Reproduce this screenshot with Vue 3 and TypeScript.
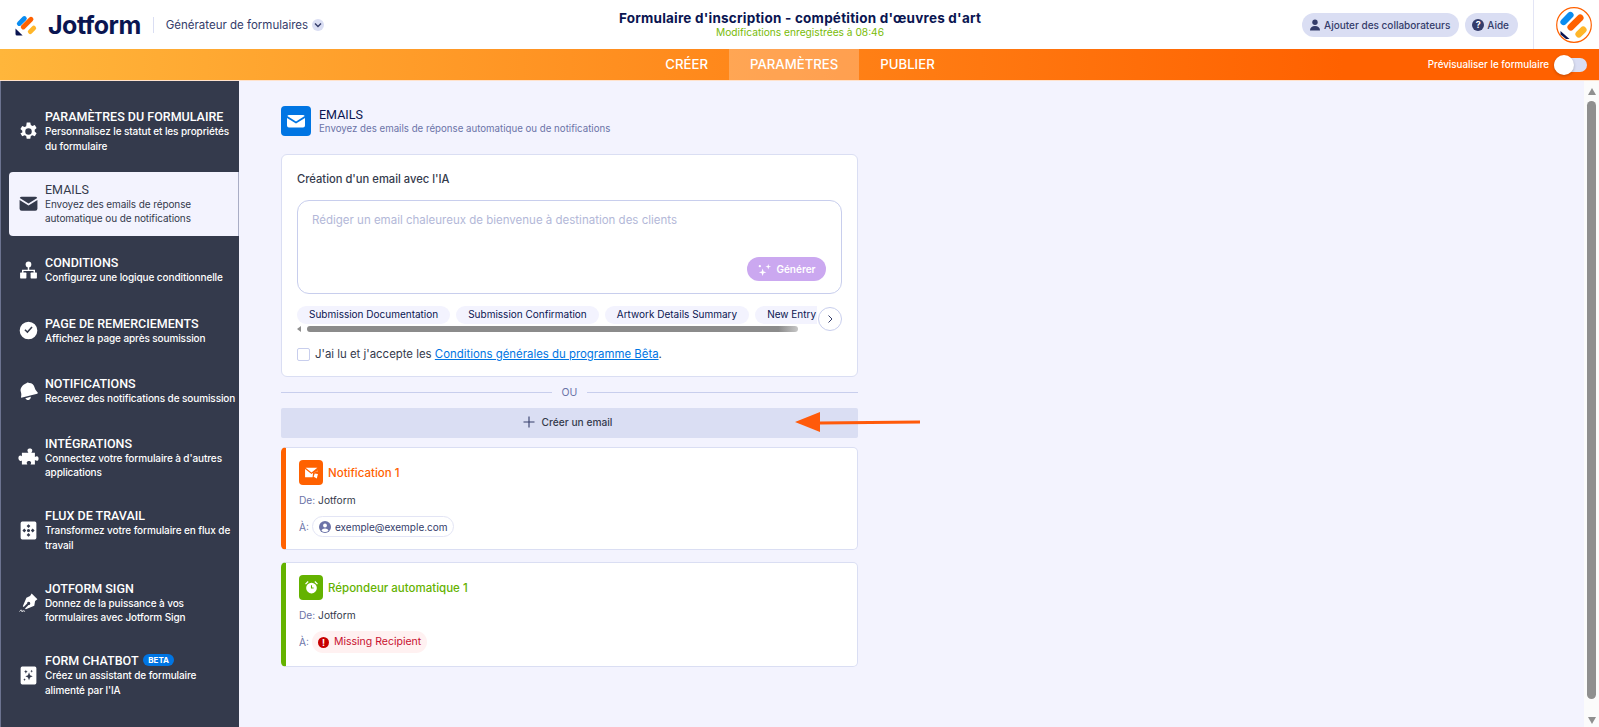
<script setup lang="ts">
interface NavItem {
  title: string
  desc: string
  icon: string
  active?: boolean
  beta?: boolean
}

const navItems: NavItem[] = [
  { title: "PARAMÈTRES DU FORMULAIRE", desc: "Personnalisez le statut et les propriétés du formulaire", icon: "gear" },
  { title: "EMAILS", desc: "Envoyez des emails de réponse automatique ou de notifications", icon: "mail", active: true },
  { title: "CONDITIONS", desc: "Configurez une logique conditionnelle", icon: "tree" },
  { title: "PAGE DE REMERCIEMENTS", desc: "Affichez la page après soumission", icon: "check" },
  { title: "NOTIFICATIONS", desc: "Recevez des notifications de soumission", icon: "bell" },
  { title: "INTÉGRATIONS", desc: "Connectez votre formulaire à d'autres applications", icon: "puzzle" },
  { title: "FLUX DE TRAVAIL", desc: "Transformez votre formulaire en flux de travail", icon: "flow" },
  { title: "JOTFORM SIGN", desc: "Donnez de la puissance à vos formulaires avec Jotform Sign", icon: "pen" },
  { title: "FORM CHATBOT", desc: "Créez un assistant de formulaire alimenté par l'IA", icon: "spark", beta: true },
]

const chips = ["Submission Documentation", "Submission Confirmation", "Artwork Details Summary", "New Entry Alert"]
</script>

<template>
  <div class="page">
    <header class="topbar">
      <div class="brand">
        <svg class="logo" viewBox="0 0 32 32" width="32" height="32">
          <rect x="-1.5" y="-8" width="6.4" height="16" rx="3.2" fill="#0a8cf0" transform="translate(9.2 9.5) rotate(45)" />
          <rect x="-3.2" y="-10.5" width="6.4" height="21" rx="3.2" fill="#ff6100" transform="translate(17.5 13.5) rotate(45)" />
          <rect x="-3.2" y="-6.5" width="6.4" height="13" rx="3.2" fill="#ffb629" transform="translate(24 22.5) rotate(45)" />
          <path d="M2 20.5v7.5a2 2 0 0 0 2 2h7.5z" fill="#0a1551" />
        </svg>
        <span class="wordmark">Jotform</span>
        <span class="brand-sep"></span>
        <span class="builder">Générateur de formulaires</span>
        <span class="caret">
          <svg viewBox="0 0 12 12" width="12" height="12"><path d="M3 4.500 6 7.500 9 4.500" fill="none" stroke="#343c6a" stroke-width="1.400" /></svg>
        </span>
      </div>
      <div class="form-title">
        <div class="form-name">Formulaire d'inscription - compétition d'œuvres d'art</div>
        <div class="saved">Modifications enregistrées à 08:46</div>
      </div>
      <div class="top-actions">
        <button class="pill">
          <svg viewBox="0 0 12 12" width="12" height="12"><circle cx="6" cy="3.200" r="2.700" fill="#343c6a" /><path d="M1 11.500c0-3 2-4.600 5-4.600s5 1.600 5 4.600z" fill="#343c6a" /></svg>
          Ajouter des collaborateurs
        </button>
        <button class="pill">
          <span class="help">?</span>
          Aide
        </button>
        <span class="top-sep"></span>
        <span class="avatar">
          <svg viewBox="0 0 36 36" width="36" height="36">
            <circle cx="18" cy="18" r="17.300" fill="#fff" stroke="#ff6100" stroke-width="1.200" />
            <rect x="-3.200" y="-8" width="6.400" height="16" rx="3.200" fill="#0a8cf0" transform="translate(11 11.500) rotate(45)" />
            <rect x="-3.400" y="-10" width="6.800" height="20" rx="3.400" fill="#ff6100" transform="translate(19.500 15.500) rotate(45)" />
            <rect x="-3.400" y="-6.500" width="6.800" height="13" rx="3.400" fill="#ffb629" transform="translate(25 25) rotate(45)" />
            <path d="M4.500 24v3.500l5.500 4.500h3.500z" fill="#0a1551" />
          </svg>
        </span>
      </div>
    </header>

    <nav class="tabs">
      <div class="tab-list">
        <a class="tab">CRÉER</a>
        <a class="tab tab-active">PARAMÈTRES</a>
        <a class="tab">PUBLIER</a>
      </div>
      <div class="preview">
        <span>Prévisualiser le formulaire</span>
        <span class="toggle"><span class="knob"></span></span>
      </div>
    </nav>

    <div class="body">
      <aside class="sidebar">
        <div v-for="item in navItems" :key="item.title" class="nav-item" :class="{ active: item.active }">
          <span class="nav-icon">
            <svg viewBox="0 0 20 20" width="21" height="21" fill="currentColor">
              <template v-if="item.icon === 'gear'">
                <path fill-rule="evenodd" d="M8.300 1.500h3.400l.5 2.400 1.500.8 2.300-.9 1.700 2.900-1.800 1.600v1.700l1.800 1.600-1.700 2.900-2.300-.9-1.500.8-.5 2.400H8.300l-.5-2.400-1.500-.8-2.300.9-1.700-2.900L4.100 11V9.300L2.300 7.700 4 4.800l2.300.9 1.500-.8zM10 7a3.100 3.100 0 1 0 0 6.200A3.100 3.100 0 0 0 10 7z" />
              </template>
              <template v-else-if="item.icon === 'mail'">
                <path d="M3.500 3.500h13a2 2 0 0 1 1.800 1.200L10 10 1.700 4.700a2 2 0 0 1 1.800-1.200z" />
                <path d="M1.500 6.700 10 12l8.500-5.300V15a2 2 0 0 1-2 2h-13a2 2 0 0 1-2-2z" />
              </template>
              <template v-else-if="item.icon === 'tree'">
                <circle cx="10" cy="4.200" r="2.700" />
                <path d="M9.300 6h1.400v3.200h5.500v3h-1.400v-1.700H5.200v1.700H3.800v-3h5.500z" />
                <rect x="2" y="12" width="6" height="5.500" rx=".6" />
                <rect x="12" y="12" width="6" height="5.500" rx=".6" />
              </template>
              <template v-else-if="item.icon === 'check'">
                <path fill-rule="evenodd" d="M10 1.600a8.400 8.400 0 1 1 0 16.800 8.400 8.400 0 0 1 0-16.800zm3.900 5.500-1.100-1-3.900 4.300-1.800-1.700-1 1.100 2.900 2.800z" />
              </template>
              <template v-else-if="item.icon === 'bell'">
                <path d="M8 2.200c.5-.9 1.600-1 2.300-.3 3-.2 4.800 1.800 5.600 4.500.6 2 1.500 3.200 2.700 4.300.5.500.3 1.200-.3 1.400L4 15.800c-.7.200-1.200-.3-1.100-.9.400-1.600.4-3.100-.3-5C1.800 7.200 3.900 3.900 8 2.200z" />
                <path d="M7 16.500l5.200-1.400c.1 1.500-.7 2.700-2 3-1.300.3-2.500-.4-3.200-1.600z" />
              </template>
              <template v-else-if="item.icon === 'puzzle'">
                <path d="M7.600 5.500h2.300c-.6-.8-.9-1.500-.9-2.200C9 2 10.100 1.400 11.300 1.400s2.300.6 2.300 1.900c0 .7-.3 1.400-.9 2.200h3.400v4c.7-.5 1.300-.8 1.900-.8 1.100 0 1.600 1 1.600 2.200s-.5 2.300-1.600 2.300c-.6 0-1.200-.3-1.900-.8v4.200h-4.200c.4-.7.600-1.200.6-1.700 0-1-1-1.600-2.100-1.600s-2.100.6-2.100 1.600c0 .5.200 1 .6 1.700H3.700v-3.700c-.5.300-1 .5-1.500.5C1 12.800.4 11.700.4 10.500s.6-2.300 1.800-2.300c.5 0 1 .2 1.500.5V5.500z" />
              </template>
              <template v-else-if="item.icon === 'flow'">
                <path fill-rule="evenodd" d="M4 1.500h12A1.500 1.500 0 0 1 17.500 3v14a1.500 1.500 0 0 1-1.500 1.500H4A1.500 1.500 0 0 1 2.500 17V3A1.500 1.500 0 0 1 4 1.500zM10 4 8.200 5.800 10 7.600l1.800-1.800zM6 8.200 4.200 10 6 11.800 7.800 10zm8 0L12.200 10l1.800 1.800 1.800-1.800zm-4 4.200-1.800 1.800L10 16l1.800-1.800zM10 8.500a1.500 1.500 0 1 0 0 3 1.500 1.500 0 0 0 0-3z" />
              </template>
              <template v-else-if="item.icon === 'pen'">
                <path fill-rule="evenodd" d="M13 1.500l5.500 5.500-2.200 1.500-.8 4.500-8 3.400-.8-.8 3.300-3.300a1.500 1.500 0 1 0-1.300-1.300L5.400 14.300l-.8-.8L8 5.500l3.500-1.600z" />
                <path d="M1.500 18.500c.8-1.200 1.700-1.600 2-1s-.3 1.200.4 1.100 1-.9 1.600-.7.500.6 1.200.5" fill="none" stroke="currentColor" stroke-width=".900" />
              </template>
              <template v-else>
                <path fill-rule="evenodd" d="M4 1.500h12A1.500 1.500 0 0 1 17.500 3v14a1.500 1.500 0 0 1-1.500 1.500H4A1.500 1.500 0 0 1 2.500 17V3A1.500 1.500 0 0 1 4 1.500zM10.500 7l-1 2.800-2.500 1 2.500 1 1 2.700 1-2.700 2.500-1-2.500-1zM7.500 4.500 7 5.800l-1.200.7 1.200.5.500 1.300.5-1.300 1.200-.5L8 5.800zm5.500 0-.4 1-.9.400.9.400.4 1 .4-1 .9-.4-.9-.4zm-6.800 8-.4 1-.9.400.9.400.4 1 .4-1 .9-.4-.9-.4z" />
              </template>
            </svg>
          </span>
          <div class="nav-text">
            <div class="nav-title">
              {{ item.title }}
              <span v-if="item.beta" class="beta">BETA</span>
            </div>
            <div class="nav-desc">{{ item.desc }}</div>
          </div>
        </div>
      </aside>

      <main class="main">
        <div class="section-head">
          <span class="section-icon">
            <svg viewBox="0 0 20 20" width="20" height="20" fill="#fff">
              <path d="M3 4h14a2 2 0 0 1 1.700 1L10 10.400 1.300 5A2 2 0 0 1 3 4z" />
              <path d="M1 7l9 5.500L19 7v7.500a2 2 0 0 1-2 2H3a2 2 0 0 1-2-2z" />
            </svg>
          </span>
          <div>
            <div class="section-title">EMAILS</div>
            <div class="section-sub">Envoyez des emails de réponse automatique ou de notifications</div>
          </div>
        </div>

        <div class="column">
          <section class="ai-card">
            <h3 class="ai-title">Création d'un email avec l'IA</h3>
            <div class="prompt">
              <div class="placeholder">Rédiger un email chaleureux de bienvenue à destination des clients</div>
              <button class="generate">
                <svg viewBox="0 0 16 16" width="15" height="15" fill="#fff">
                  <path d="M6 7l1 3 3 1-3 1-1 3-1-3-3-1 3-1z" />
                  <path d="M12 2l.7 2.300L15 5l-2.300.7L12 8l-.7-2.300L9 5l2.300-.7z" />
                  <circle cx="3" cy="4.500" r="1.200" />
                </svg>
                Générer
              </button>
            </div>
            <div class="chips-wrap">
              <div class="chips">
                <span v-for="chip in chips" :key="chip" class="chip">{{ chip }}</span>
              </div>
              <div class="chips-track">
                <span class="chips-arrow"></span>
                <span class="chips-thumb"></span>
              </div>
              <button class="chips-next">
                <svg viewBox="0 0 12 12" width="12" height="12"><path d="M4.500 2.500 8 6 4.500 9.500" fill="none" stroke="#343c6a" stroke-width="1" /></svg>
              </button>
            </div>
            <label class="terms">
              <span class="checkbox"></span>
              <span>J'ai lu et j'accepte les <a class="link">Conditions générales du programme Bêta</a>.</span>
            </label>
          </section>

          <div class="or"><span>OU</span></div>

          <button class="create">
            <svg viewBox="0 0 12 12" width="12" height="12"><path d="M6 .5v11M.5 6h11" stroke="#343c6a" stroke-width="1.100" fill="none" /></svg>
            Créer un email
          </button>

          <article class="mail-card orange">
            <div class="mail-head">
              <span class="mail-icon">
                <svg viewBox="0 0 14 14" width="15" height="15" fill="#fff">
                  <path d="M1.500 2.500h11L7 7z" />
                  <path d="M1 3.800 7 8.500l2-1.500 3.800-1.500L13 3.800v2l-4.500 1.500L8 11.500H1z" />
                  <path d="M10 8l3 .5-1 4-3-1.500z" />
                </svg>
              </span>
              <span class="mail-name">Notification 1</span>
            </div>
            <div class="mail-line"><span class="mail-key">De:</span> Jotform</div>
            <div class="mail-line to">
              <span class="mail-key">À:</span>
              <span class="recipient">
                <svg viewBox="0 0 12 12" width="12" height="12">
                  <circle cx="6" cy="6" r="6" fill="#6c73a8" />
                  <circle cx="6" cy="4.500" r="1.900" fill="#fff" />
                  <path d="M2.500 9.800c.5-1.700 1.800-2.400 3.500-2.400s3 .7 3.500 2.400A5 5 0 0 1 6 11a5 5 0 0 1-3.500-1.200z" fill="#fff" />
                </svg>
                exemple@exemple.com
              </span>
            </div>
          </article>

          <article class="mail-card green">
            <div class="mail-head">
              <span class="mail-icon">
                <svg viewBox="0 0 14 14" width="15" height="15" fill="#fff">
                  <path fill-rule="evenodd" d="M7 2.500a5 5 0 1 1 0 10 5 5 0 0 1 0-10zM6.500 5v3h2.500V7H7.500V5z" />
                  <path d="M1 3.500 3.500 1l.8.8-2.500 2.500zM13 3.500 10.500 1l-.8.8 2.500 2.500z" />
                </svg>
              </span>
              <span class="mail-name">Répondeur automatique 1</span>
            </div>
            <div class="mail-line"><span class="mail-key">De:</span> Jotform</div>
            <div class="mail-line to">
              <span class="mail-key">À:</span>
              <span class="missing">
                <span class="bang">!</span>
                Missing Recipient
              </span>
            </div>
          </article>

          <svg class="arrow" viewBox="0 0 128 22" width="128" height="22">
            <path d="M126 9.500 26 10.500V1L1 11l25 10v-7.500l100-1z" fill="#ff5a0a" />
          </svg>
        </div>
      </main>

      <div class="scrollbar">
        <span class="sb-up"></span>
        <span class="sb-thumb"></span>
        <span class="sb-down"></span>
      </div>
    </div>
  </div>
</template>

<style>
html,
body {
  margin: 0;
  padding: 0;
  overflow: hidden;
}
</style>

<style scoped>
.page {
  height: 727px;
  display: flex;
  flex-direction: column;
  overflow: hidden;
  font-family: Inter, "Noto Sans", sans-serif;
  color: #0a1551;
  background: #f3f3fe;
}

button {
  font-family: inherit;
  border: none;
  cursor: pointer;
}

.topbar {
  height: 49px;
  flex: none;
  background: #fff;
  display: grid;
  grid-template-columns: 1fr auto 1fr;
  align-items: center;
}

.brand {
  display: flex;
  align-items: center;
  padding-left: 14px;
}

.logo {
  width: 24px;
  height: 24px;
}

.wordmark {
  margin-left: 10px;
  font-size: 25px;
  font-weight: 700;
  letter-spacing: -0.5px;
  color: #0a1551;
}

.brand-sep {
  width: 1px;
  height: 16px;
  margin: 0 12px;
  background: #dadef3;
}

.builder {
  font-size: 11.5px;
  color: #343c6a;
}

.caret {
  width: 12px;
  height: 12px;
  margin-left: 4px;
  border-radius: 50%;
  background: #dadef3;
  display: flex;
}

.form-title {
  text-align: center;
  margin: -1px 0 0 1px;
}

.form-name {
  font-size: 13.5px;
  font-weight: 700;
  line-height: 16px;
  letter-spacing: 0.22px;
  color: #0a1551;
}

.saved {
  font-size: 10.2px;
  line-height: 12px;
  color: #78bb07;
}

.top-actions {
  display: flex;
  align-items: center;
  justify-content: flex-end;
  gap: 6px;
}

.pill {
  height: 24px;
  padding: 0 9px 0 7px;
  border-radius: 12px;
  background: #dadef3;
  color: #343c6a;
  font-size: 10px;
  font-weight: 500;
  display: flex;
  align-items: center;
  gap: 3px;
}

.help {
  width: 12px;
  height: 12px;
  border-radius: 50%;
  background: #343c6a;
  color: #fff;
  font-size: 9px;
  font-weight: 700;
  line-height: 12px;
  text-align: center;
}

.top-sep {
  width: 1px;
  height: 49px;
  margin: 0 16px 0 9px;
  background: #e3e5f5;
}

.avatar {
  display: flex;
  margin-right: 7px;
}

.tabs {
  height: 32px;
  flex: none;
  position: relative;
  display: flex;
  justify-content: center;
  background: linear-gradient(90deg, #ffb63b 0%, #ff6100 84%);
  border-bottom: 1px solid #ffe2cc;
  box-sizing: border-box;
}

.tab-list {
  display: flex;
  margin-left: 1px;
}

.tab {
  padding: 0 21px;
  color: #fff;
  font-size: 13.2px;
  font-weight: 500;
  line-height: 31px;
}

.tab-active {
  background: rgba(255, 255, 255, 0.25);
}

.preview {
  position: absolute;
  right: 12px;
  top: 0;
  height: 31px;
  display: flex;
  align-items: center;
  gap: 5px;
  color: #fff;
  font-size: 9.8px;
  font-weight: 500;
}

.toggle {
  width: 33px;
  height: 14px;
  border-radius: 7px;
  background: #dadef3;
  display: flex;
  align-items: center;
}

.knob {
  width: 20px;
  height: 20px;
  border-radius: 50%;
  background: #fff;
  box-shadow: 0 1px 3px rgba(0, 0, 0, 0.25);
}

.body {
  flex: 1;
  display: flex;
  min-height: 0;
}

.sidebar {
  width: 239px;
  flex: none;
  box-sizing: border-box;
  background: #343a4c;
  border-left: 1px solid #6c7390;
  padding: 18px 0 0 8px;
  display: flex;
  flex-direction: column;
  gap: 8.5px;
  color: #fff;
}

.nav-item {
  min-height: 52px;
  box-sizing: border-box;
  padding: 10px 2.5px 10px 10px;
  border-radius: 4px 0 0 4px;
  display: flex;
  align-items: center;
  gap: 8px;
}

.nav-item.active {
  background: #f3f3fe;
  color: #343a4c;
  box-shadow: inset -1px 0 #a9adc5;
}

.nav-icon {
  width: 18px;
  flex: none;
  display: flex;
  justify-content: center;
}

.nav-icon svg {
  flex: none;
}

.nav-text {
  min-width: 0;
}

.nav-title {
  font-family: Roboto, Inter, sans-serif;
  font-size: 12.5px;
  font-weight: 500;
  line-height: 15px;
  white-space: nowrap;
}

.active .nav-title {
  font-weight: 400;
}

.nav-desc {
  font-size: 10px;
  font-weight: 500;
  line-height: 14.5px;
  letter-spacing: -0.1px;
}

.active .nav-desc {
  font-weight: 400;
}

.beta {
  display: inline-block;
  margin-left: 2px;
  padding: 0 5px;
  border-radius: 6px;
  background: #0075e3;
  font-family: Inter, sans-serif;
  font-size: 8px;
  font-weight: 700;
  line-height: 12px;
  vertical-align: 2px;
}

.main {
  flex: 1;
  min-width: 0;
  padding: 25px 0 0 42px;
}

.section-head {
  display: flex;
  align-items: center;
  gap: 8px;
}

.section-icon {
  width: 30px;
  height: 30px;
  border-radius: 4px;
  background: #0075e3;
  display: flex;
  align-items: center;
  justify-content: center;
}

.section-title {
  font-family: Roboto, Inter, sans-serif;
  font-size: 12.5px;
  line-height: 15px;
  color: #0a1551;
}

.section-sub {
  font-size: 9.7px;
  line-height: 13px;
  color: #6c73a8;
}

.column {
  position: relative;
  width: 577px;
  margin-top: 18px;
}

.ai-card {
  height: 223px;
  box-sizing: border-box;
  padding: 17px 15px 0;
  background: #fff;
  border: 1px solid #dadef3;
  border-radius: 6px;
}

.ai-title {
  margin: 0;
  font-size: 11.2px;
  font-weight: 500;
  line-height: 14px;
  color: #343a4c;
}

.prompt {
  position: relative;
  height: 94px;
  margin-top: 14px;
  box-sizing: border-box;
  padding: 11px 14px;
  border: 1px solid #c8ceed;
  border-radius: 12px;
}

.placeholder {
  font-size: 11.5px;
  line-height: 16px;
  color: #b3b8d8;
}

.generate {
  position: absolute;
  right: 15px;
  bottom: 12px;
  width: 79px;
  height: 24px;
  border-radius: 12px;
  background: #cba8f0;
  color: #fff;
  font-size: 10px;
  font-weight: 600;
  display: flex;
  align-items: center;
  justify-content: center;
  gap: 4px;
  padding-right: 6px;
}

.chips-wrap {
  position: relative;
  margin-top: 12px;
  overflow: hidden;
  width: 545px;
}

.chips {
  display: flex;
  gap: 6px;
  width: 520px;
  overflow: hidden;
}

.chip {
  flex: none;
  height: 18px;
  padding: 0 12px;
  border-radius: 9px;
  background: #f3f3fe;
  color: #0a1551;
  font-size: 10px;
  line-height: 17px;
  white-space: nowrap;
}

.chips-track {
  height: 6px;
  margin-top: 2px;
  display: flex;
  align-items: center;
}

.chips-arrow {
  width: 0;
  height: 0;
  margin-right: 6px;
  border-top: 3px solid transparent;
  border-bottom: 3px solid transparent;
  border-right: 4px solid #8f8f8f;
}

.chips-thumb {
  width: 491px;
  height: 6px;
  border-radius: 3px;
  background: linear-gradient(90deg, #8b8b8b 96%, #c6c6c6);
}

.chips-next {
  position: absolute;
  right: 0;
  top: 1px;
  width: 24px;
  height: 24px;
  padding: 0;
  border: 1px solid #c8ceed;
  border-radius: 50%;
  background: #fff;
  display: flex;
  align-items: center;
  justify-content: center;
}

.terms {
  margin-top: 15px;
  display: flex;
  align-items: center;
  gap: 5px;
  font-size: 11.4px;
  line-height: 14px;
  color: #343a4c;
}

.checkbox {
  width: 11px;
  height: 11px;
  border: 1px solid #c8ceed;
  border-radius: 2px;
}

.link {
  color: #0075e3;
  text-decoration: underline;
}

.or {
  height: 31px;
  display: flex;
  align-items: center;
  gap: 10px;
  font-size: 10.5px;
  color: #6c73a8;
}

.or::before,
.or::after {
  content: "";
  flex: 1;
  height: 1px;
  background: #c8ceed;
}

.create {
  width: 100%;
  height: 30px;
  padding: 0 4px 2px 0;
  border-radius: 2px;
  background: #dadef3;
  color: #343a4c;
  font-size: 10.2px;
  font-weight: 500;
  display: flex;
  align-items: center;
  justify-content: center;
  gap: 7px;
}

.mail-card {
  box-sizing: border-box;
  margin-top: 9px;
  padding: 12px 13px 0;
  background: #fff;
  border: 1px solid #dadef3;
  border-left-width: 5px;
  border-radius: 5px;
  height: 103px;
}

.mail-card + .mail-card {
  margin-top: 12px;
  height: 105px;
}

.orange {
  border-left-color: #ff6100;
  color: #ff6100;
}

.green {
  border-left-color: #64b200;
  color: #64b200;
}

.mail-head {
  display: flex;
  align-items: center;
  gap: 5px;
}

.mail-icon {
  width: 24px;
  height: 25px;
  border-radius: 4px;
  background: currentColor;
  display: flex;
  align-items: center;
  justify-content: center;
}

.mail-name {
  font-size: 11.5px;
  font-weight: 500;
}

.mail-line {
  margin-top: 8px;
  font-size: 10.2px;
  line-height: 14px;
  color: #343a4c;
}

.mail-line.to {
  margin-top: 9px;
  display: flex;
  align-items: center;
  gap: 3px;
}

.mail-key {
  color: #6c73a8;
}

.recipient {
  height: 19px;
  padding: 0 5px 0 6px;
  border: 1px solid #e3e5f5;
  border-radius: 11px;
  display: flex;
  align-items: center;
  gap: 4px;
  color: #343c6a;
  font-size: 10px;
}

.missing {
  height: 22px;
  padding: 0 6px 0 6px;
  border-radius: 11px;
  background: #fff1f1;
  color: #c8102e;
  display: flex;
  align-items: center;
  gap: 5px;
  font-size: 10.5px;
}

.bang {
  width: 11px;
  height: 11px;
  border-radius: 50%;
  background: #c70000;
  color: #fff;
  font-size: 9px;
  font-weight: 700;
  line-height: 11px;
  text-align: center;
}

.arrow {
  position: absolute;
  left: 513px;
  top: 257px;
}

.scrollbar {
  width: 15px;
  flex: none;
  background: #fbfbfb;
  position: relative;
  display: flex;
  flex-direction: column;
  align-items: center;
}

.sb-up,
.sb-down {
  width: 0;
  height: 0;
  border-left: 4.5px solid transparent;
  border-right: 4.5px solid transparent;
}

.sb-up {
  margin-top: 7px;
  border-bottom: 7px solid #8f8f8f;
}

.sb-down {
  margin-top: 18px;
  border-top: 7px solid #8f8f8f;
}

.sb-thumb {
  width: 9px;
  height: 598px;
  margin-top: 6px;
  border-radius: 5px;
  background: #8f8f8f;
}
</style>
